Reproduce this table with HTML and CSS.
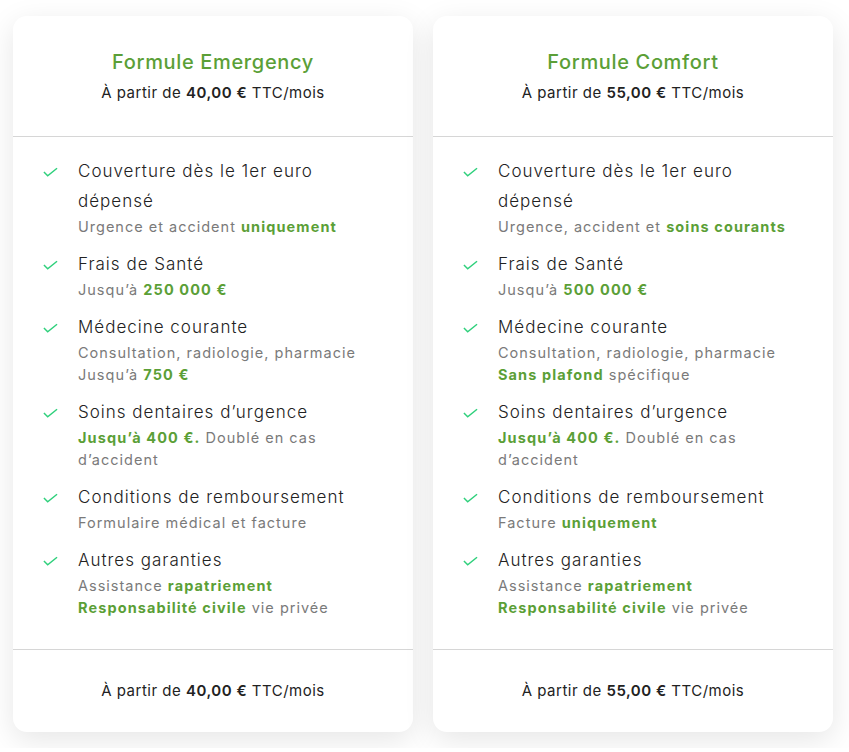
FILE: index.html
```html
<!DOCTYPE html>
<html lang="fr">
<head>
<meta charset="utf-8">
<link rel="stylesheet" href="styles.css">
</head>
<body>
<div class="grid">
  <div class="card">
    <div class="head">
      <h2 class="title">Formule Emergency</h2>
      <p class="price">À partir de <b>40,00 €</b> TTC/mois</p>
    </div>
    <ul class="list">
      <li><svg class="chk" viewBox="0 0 16 10"><path d="M1 5 L5 9 L15 1"/></svg><div><div class="it">Couverture dès le 1er euro dépensé</div><div class="sub">Urgence et accident <b>uniquement</b></div></div></li>
      <li><svg class="chk" viewBox="0 0 16 10"><path d="M1 5 L5 9 L15 1"/></svg><div><div class="it">Frais de Santé</div><div class="sub">Jusqu’à <b>250 000 €</b></div></div></li>
      <li><svg class="chk" viewBox="0 0 16 10"><path d="M1 5 L5 9 L15 1"/></svg><div><div class="it">Médecine courante</div><div class="sub">Consultation, radiologie, pharmacie<br>Jusqu’à <b>750 €</b></div></div></li>
      <li><svg class="chk" viewBox="0 0 16 10"><path d="M1 5 L5 9 L15 1"/></svg><div><div class="it">Soins dentaires d’urgence</div><div class="sub"><b>Jusqu’à 400 €.</b> Doublé en cas<br>d’accident</div></div></li>
      <li><svg class="chk" viewBox="0 0 16 10"><path d="M1 5 L5 9 L15 1"/></svg><div><div class="it">Conditions de remboursement</div><div class="sub">Formulaire médical et facture</div></div></li>
      <li><svg class="chk" viewBox="0 0 16 10"><path d="M1 5 L5 9 L15 1"/></svg><div><div class="it">Autres garanties</div><div class="sub">Assistance <b>rapatriement</b><br><b>Responsabilité civile</b> vie privée</div></div></li>
    </ul>
    <div class="foot">À partir de <b>40,00 €</b> TTC/mois</div>
  </div>
  <div class="card">
    <div class="head">
      <h2 class="title">Formule Comfort</h2>
      <p class="price">À partir de <b>55,00 €</b> TTC/mois</p>
    </div>
    <ul class="list">
      <li><svg class="chk" viewBox="0 0 16 10"><path d="M1 5 L5 9 L15 1"/></svg><div><div class="it">Couverture dès le 1er euro dépensé</div><div class="sub">Urgence, accident et <b>soins courants</b></div></div></li>
      <li><svg class="chk" viewBox="0 0 16 10"><path d="M1 5 L5 9 L15 1"/></svg><div><div class="it">Frais de Santé</div><div class="sub">Jusqu’à <b>500 000 €</b></div></div></li>
      <li><svg class="chk" viewBox="0 0 16 10"><path d="M1 5 L5 9 L15 1"/></svg><div><div class="it">Médecine courante</div><div class="sub">Consultation, radiologie, pharmacie<br><b>Sans plafond</b> spécifique</div></div></li>
      <li><svg class="chk" viewBox="0 0 16 10"><path d="M1 5 L5 9 L15 1"/></svg><div><div class="it">Soins dentaires d’urgence</div><div class="sub"><b>Jusqu’à 400 €.</b> Doublé en cas<br>d’accident</div></div></li>
      <li><svg class="chk" viewBox="0 0 16 10"><path d="M1 5 L5 9 L15 1"/></svg><div><div class="it">Conditions de remboursement</div><div class="sub">Facture <b>uniquement</b></div></div></li>
      <li><svg class="chk" viewBox="0 0 16 10"><path d="M1 5 L5 9 L15 1"/></svg><div><div class="it">Autres garanties</div><div class="sub">Assistance <b>rapatriement</b><br><b>Responsabilité civile</b> vie privée</div></div></li>
    </ul>
    <div class="foot">À partir de <b>55,00 €</b> TTC/mois</div>
  </div>
</div>
</body>
</html>
```
FILE: styles.css
```css
html, body {
  margin: 0;
  background: #ffffff;
}
body {
  font-family: Inter, "Noto Sans", sans-serif;
  color: #222;
  padding: 16px 13px;
}
.grid {
  display: grid;
  grid-template-columns: 400px 400px;
  column-gap: 20px;
}
.card {
  background: #fff;
  border-radius: 14px;
  box-shadow: 0 8px 30px rgba(0, 0, 0, 0.1);
  height: 716px;
  display: flex;
  flex-direction: column;
}
.head {
  text-align: center;
  padding: 32px 20px 31px;
  border-bottom: 1px solid #d6d6d6;
}
.title {
  margin: 0;
  font-size: 20px;
  line-height: 28px;
  font-weight: 500;
  letter-spacing: 0.65px;
  color: #5b9f37;
}
.price, .foot {
  margin: 5px 0 0;
  font-size: 15px;
  line-height: 24px;
  font-weight: 400;
  letter-spacing: 0.5px;
  color: #222;
}
.price b, .foot b { font-weight: 600; }
.list {
  list-style: none;
  margin: 0;
  padding: 19px 30px 0;
  flex: 1;
}
.list li {
  display: flex;
  gap: 20px;
  margin-bottom: 11px;
}
.chk {
  width: 15px;
  height: 10px;
  flex: none;
  margin-top: 11px;
  fill: none;
  stroke: #2fd07c;
  stroke-width: 1.6;
}
.it {
  font-size: 17px;
  line-height: 30px;
  font-weight: 300;
  letter-spacing: 1px;
  color: #222;
}
.sub {
  font-size: 14.5px;
  line-height: 22px;
  color: #7a7a7a;
  font-weight: 400;
  letter-spacing: 1px;
}
.sub b {
  color: #5b9f37;
  font-weight: 700;
  letter-spacing: 1.1px;
}
.foot {
  margin: 0;
  border-top: 1px solid #d6d6d6;
  height: 82px;
  line-height: 82px;
  text-align: center;
}
```
